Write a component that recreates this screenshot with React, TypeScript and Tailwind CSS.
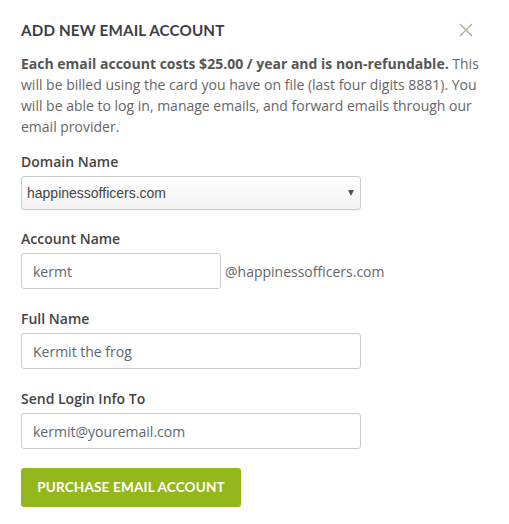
export default function App() {
  const label = "block text-[14px] font-semibold leading-[21px] text-[#444]";
  const input =
    "h-[36px] rounded-[3px] border border-[#ccc] bg-white px-[11px] text-[14px] text-[#5c6670] outline-none";

  return (
    <div className="min-h-[524px] w-[509px] bg-white px-[21px] pt-[20px] font-['Open_Sans',sans-serif]">
      <div className="flex items-center justify-between">
        <h2 className="font-['Lato',sans-serif] text-[15.2px] font-bold uppercase leading-[20px] tracking-[0.01em] text-[#3d3f44]">
          Add new email account
        </h2>
        <button className="mr-[15px] text-[#b3a795]" aria-label="Close">
          <svg width="14" height="14" viewBox="0 0 14 14" fill="none" stroke="currentColor" strokeWidth="1.3">
            <path d="M1 1 L13 13 M13 1 L1 13" />
          </svg>
        </button>
      </div>

      <p className="mt-[13px] -mr-[4px] text-[14px] leading-[21px] text-[#666]">
        <strong className="font-bold text-[#555]">
          Each email account costs $25.00 / year and is non-refundable.
        </strong>{" "}
        This will be billed using the card you have on file (last four digits 8881). You will be able to log
        in, manage emails, and forward emails through our email provider.
      </p>

      <div className="mt-[14px]">
        <label className={label}>Domain Name</label>
        <div className="relative mt-[4px] flex h-[34px] w-[340px] items-center rounded-[3px] border border-[#ccc] bg-gradient-to-b from-white to-[#f3f3f3] pl-[5px] font-['Liberation_Sans',sans-serif] text-[14px] text-[#444] shadow-[0_1px_1px_rgba(0,0,0,0.05)]">
          happinessofficers.com
          <span className="absolute right-[6px] top-[13px] h-0 w-0 border-x-[3.5px] border-t-[6px] border-x-transparent border-t-[#555]" />
        </div>
      </div>

      <div className="mt-[18px]">
        <label className={label}>Account Name</label>
        <div className="mt-[4px] flex items-center gap-[4px]">
          <input className={`${input} w-[200px]`} defaultValue="kermt" />
          <span className="text-[14px] text-[#666]">@happinessofficers.com</span>
        </div>
      </div>

      <div className="mt-[19px]">
        <label className={label}>Full Name</label>
        <input className={`${input} mt-[4px] w-[340px]`} defaultValue="Kermit the frog" />
      </div>

      <div className="mt-[19px]">
        <label className={label}>Send Login Info To</label>
        <input className={`${input} mt-[4px] w-[340px]`} defaultValue="kermit@youremail.com" />
      </div>

      <button className="mt-[19px] h-[39px] w-[220px] rounded-[3px] bg-[#94b71b] font-['Lato',sans-serif] text-[13.6px] font-bold uppercase tracking-[0.01em] text-white">
        Purchase email account
      </button>
    </div>
  );
}
